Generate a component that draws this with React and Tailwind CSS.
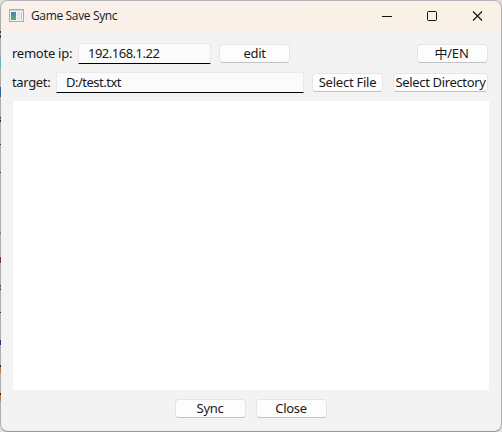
import React from "react";

const EDGE_MARKS = [
  { h: 31, c: "bg-transparent" }, { h: 2, c: "bg-[#333]" }, { h: 2, c: "bg-transparent" }, { h: 3, c: "bg-[#444]" },
  { h: 19, c: "bg-transparent" }, { h: 10, c: "bg-[#62b4bb]" }, { h: 20, c: "bg-transparent" }, { h: 10, c: "bg-[#286a9c]" },
  { h: 20, c: "bg-transparent" }, { h: 1, c: "bg-[#222]" }, { h: 2, c: "bg-[#a67958]" }, { h: 2, c: "bg-[#333]" },
  { h: 22, c: "bg-transparent" }, { h: 1, c: "bg-[#5b301b]" }, { h: 27, c: "bg-transparent" }, { h: 1, c: "bg-[#5b301b]" },
  { h: 59, c: "bg-transparent" }, { h: 2, c: "bg-[#4d88bd]" }, { h: 23, c: "bg-transparent" }, { h: 6, c: "bg-[#743047]" },
  { h: 22, c: "bg-transparent" }, { h: 1, c: "bg-[#333]" }, { h: 3, c: "bg-[#4f93ae]" }, { h: 1, c: "bg-[#333]" },
  { h: 22, c: "bg-transparent" }, { h: 1, c: "bg-[#333]" }, { h: 27, c: "bg-transparent" }, { h: 5, c: "bg-[#4a246b]" },
  { h: 20, c: "bg-transparent" }, { h: 2, c: "bg-[#3d2228]" }, { h: 6, c: "bg-[#b87b46]" }, { h: 20, c: "bg-transparent" },
  { h: 2, c: "bg-[#3d2228]" }, { h: 6, c: "bg-[#b87b46]" },
];

function Button({ children, className = "" }) {
  return (
    <button className={`flex h-[19px] shrink-0 items-center justify-center whitespace-nowrap rounded-[4px] border border-[#e5e5e5] border-b-[#c2c2c2] bg-[#fdfdfd] ${className}`}>
      {children}
    </button>
  );
}

function Field({ children, className = "" }) {
  return (
    <div className={`flex h-[21px] shrink-0 items-center rounded-t-[3px] border border-[#e9e9e9] border-b-black bg-[#fbfbfb] pl-[9px] ${className}`}>
      {children}
    </div>
  );
}

function AppIcon() {
  return (
    <svg className="mb-[2px] ml-2 h-[13px] w-[15px]" viewBox="0 0 15 13" shapeRendering="crispEdges">
      <defs>
        <linearGradient id="pane" x1="0" y1="0" x2="0.4" y2="1">
          <stop offset="0" stopColor="#3f78ac" />
          <stop offset="1" stopColor="#58b07a" />
        </linearGradient>
      </defs>
      <rect width="15" height="13" fill="#a7acae" />
      <rect x="1" y="1" width="13" height="11" fill="#f4f6f6" />
      <rect x="1" y="1" width="13" height="1" fill="#c9d0d3" />
      <rect x="2" y="3" width="5" height="8" fill="url(#pane)" />
      <rect x="8" y="3" width="3" height="8" fill="#e3e7ea" />
      <rect x="12" y="3" width="1" height="8" fill="#a5cdb8" />
    </svg>
  );
}

export default function App() {
  return (
    <div className="flex h-[432px] w-[502px] overflow-hidden bg-[#dedfe1] font-['Noto_Sans','Noto_Sans_CJK_SC',sans-serif] text-[13px] leading-none text-[#191919]">
      <div className="relative flex h-[432px] w-[502px] flex-col overflow-hidden rounded-[8px] border border-[#adadad] border-t-[#b4b4b8] border-b-[#979797] bg-[#f3f3f3]">
        <header className="flex h-[30px] shrink-0 items-center bg-linear-to-r from-[#f9f0eb] to-[#f9f1e6]">
          <AppIcon />
          <span className="ml-[7px] whitespace-nowrap font-['Open_Sans',sans-serif] text-[12px] tracking-[-0.35px]">Game Save Sync</span>
          <svg className="ml-auto mr-4 h-[11px] w-[103px]" viewBox="0 0 103 11" fill="none" stroke="#111">
            <path d="M0 5.5h10" />
            <rect x="45.5" y="0.5" width="9" height="9" rx="1" />
            <path d="M91 0.5l9 9M100 0.5l-9 9" strokeWidth="1.1" />
          </svg>
        </header>

        <div className="mt-3 flex h-[21px] shrink-0 items-center pl-[11px] pr-[13px]">
          <span className="w-[66px] whitespace-nowrap tracking-[-0.25px]">remote ip:</span>
          <Field className="w-[133px] tracking-[-0.5px]">192.168.1.22</Field>
          <Button className="ml-2 w-[71px] tracking-[-0.3px]">edit</Button>
          <Button className="ml-auto w-[71px] pr-[2px] tracking-[-0.2px]">中/EN</Button>
        </div>
        <div className="mt-2 flex h-[21px] shrink-0 items-center pl-[11px] pr-[13px]">
          <span className="w-[44px] whitespace-nowrap tracking-[-0.35px]">target:</span>
          <Field className="w-[248px] tracking-[-0.5px]">D:/test.txt</Field>
          <Button className="ml-2 w-[71px] tracking-[-0.25px]">Select File</Button>
          <Button className="ml-auto w-[95px] tracking-[-0.35px]">Select Directory</Button>
        </div>

        <main className="ml-3 mt-2 h-[289px] w-[476px] shrink-0 bg-white" />

        <footer className="mr-[1px] mt-[9px] flex shrink-0 justify-center gap-[10px]">
          <Button className="w-[71px] tracking-[-0.3px]">Sync</Button>
          <Button className="w-[71px] tracking-[-0.3px]">Close</Button>
        </footer>
      </div>
      <div className="absolute left-0 top-0 w-px">
        {EDGE_MARKS.map((m, i) => (
          <div key={i} className={m.c} style={{ height: m.h }} />
        ))}
      </div>
    </div>
  );
}
